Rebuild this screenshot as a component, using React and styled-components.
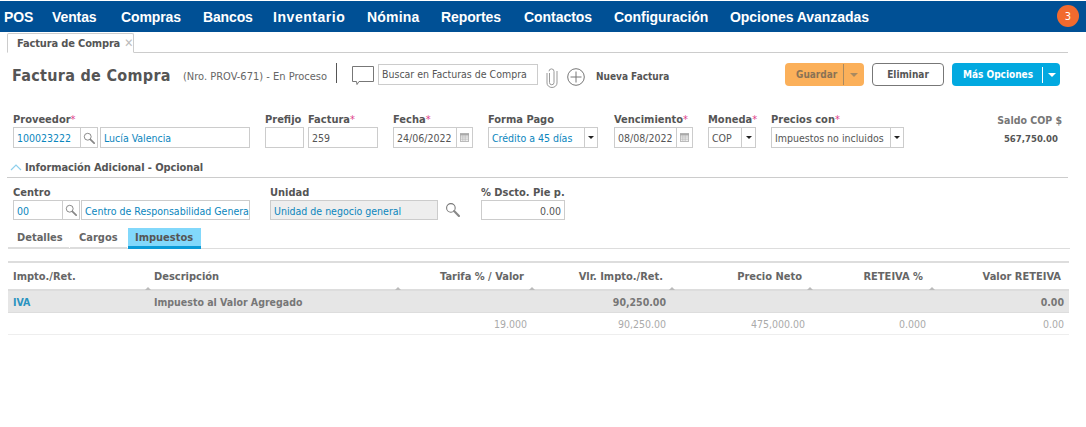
import React from "react";
import styled, { createGlobalStyle } from "styled-components";

const Global = createGlobalStyle`
  html, body { margin: 0; padding: 0; background: #fff; }
  body { font-family: "DejaVu Sans", Tahoma, sans-serif; font-stretch: condensed; font-size: 11px; color: #555; }
  * { box-sizing: border-box; }
`;

const Page = styled.div`width: 1086px; height: 427px; overflow: hidden; background: #fff; position: relative;`;

const Nav = styled.nav`
  margin-top: 1px; height: 31px; background: #005095; display: flex; align-items: center; position: relative;
`;
const NavItem = styled.span`
  width: ${p => p.$w}px; flex: none; color: #fff; font-family: "Liberation Sans", sans-serif; font-weight: 700; font-size: 14px; white-space: nowrap;
  letter-spacing: ${p => p.$ls}px;
`;
const NavList = styled.div`display: flex; padding-left: 4px; flex: 1;`;
const Badge = styled.span`
  width: 22px; height: 22px; margin-right: 7px; margin-top: -1px; border-radius: 50%; background: #f26a2e; color: #fff; font-size: 11px; display: flex; align-items: center; justify-content: center;
`;

const TabBar = styled.div`
  margin: 1px 18px 0 7px; height: 20px; border-bottom: 1px solid #ccc; display: flex;
`;
const DocTab = styled.div`
  width: 127px; height: 20px; border: 1px solid #ccc; border-bottom: 1px solid #fff; border-radius: 2px 2px 0 0;
  padding-left: 9px; display: flex; align-items: center; gap: 4px; font-weight: 700; font-size: 11px; letter-spacing: -.15px; color: #555; white-space: nowrap;
`;
const Close = styled.span`color: #bbb; font-size: 12px; font-weight: 400; line-height: 1;`;

const TitleRow = styled.div`
  height: 47px; padding: 9px 0 0 12px; display: flex; align-items: flex-start;
`;
const H1 = styled.h1`
  margin: 5px 0 0; width: 171px; flex: none; font-size: 16px; line-height: 18px; font-weight: 700; color: #555; white-space: nowrap; letter-spacing: .3px;
`;
const Sub = styled.span`margin-top: 8px; width: 153px; flex: none; font-size: 11px; color: #666; white-space: nowrap;`;
const VBar = styled.span`width: 1px; height: 20px; margin: 1px 15px 0 0; background: #555; flex: none;`;
const SearchBox = styled.div`
  width: 160px; height: 21px; margin: 2px 0 0 4px; flex: none; border: 1px solid #ccc; padding-left: 3px; font-size: 10.5px; line-height: 19px; color: #555; white-space: nowrap; overflow: hidden;
`;
const IconSlot = styled.span`display: block; flex: none; margin: ${p => p.$m};`;
const NewInvoice = styled.span`margin: 9px 0 0 11px; width: 189px; flex: none; font-weight: 700; font-size: 10px; color: #555; white-space: nowrap;`;
const Btn = styled.div`
  flex: none; height: 23px; width: ${p => p.$w}px; margin: 1px 0 0 ${p => p.$ml}px; border-radius: 4px; display: flex; align-items: center;
  font-weight: 700; font-size: 10px; white-space: nowrap;
  background: ${p => p.$bg}; color: ${p => p.$c}; border: ${p => p.$bd || "none"};
  justify-content: ${p => p.$center ? "center" : "flex-start"};
`;
const BtnLabel = styled.span`padding-left: ${p => p.$pl}px; width: ${p => p.$w}px; flex: none;`;
const BtnSep = styled.span`width: 1px; height: ${p => p.$h}px; background: ${p => p.$c}; flex: none;`;
const BtnCaret = styled.span`
  width: 0; height: 0; margin-left: ${p => p.$ml}px; border-left: 4px solid transparent; border-right: 4px solid transparent; border-top: 4px solid ${p => p.$c}; flex: none;
`;

const FormRow = styled.div`display: flex; align-items: flex-start; padding-left: 13px; margin-top: ${p => p.$mt || 0}px;`;
const Field = styled.div`width: ${p => p.$w}px; margin-left: ${p => p.$ml || 0}px; flex: none;`;
const Label = styled.div`height: 15px; font-size: 11px; line-height: 16px; font-weight: 700; color: #555; white-space: nowrap;`;
const Req = styled.span`color: #e0408a; font-weight: 400;`;
const Inputs = styled.div`display: flex; height: ${p => p.$h || 21}px;`;
const Box = styled.div`
  height: 100%; border: 1px solid #ccc; font-size: 10.5px; line-height: 20px; padding: 0 3px; overflow: hidden; white-space: nowrap;
  width: ${p => p.$w ? p.$w + "px" : "auto"}; flex: ${p => p.$w ? "none" : 1};
  color: ${p => p.$blue ? "#0b86bd" : "#555"};
  background: ${p => p.$grey ? "#eeeeee" : "#fff"};
  margin-left: ${p => p.$ml || 0}px;
  border-left-width: ${p => p.$nl ? 0 : 1}px;
  text-align: ${p => p.$right ? "right" : "left"};
  display: ${p => p.$icon ? "flex" : "block"};
  align-items: center; justify-content: center;
  ${p => p.$icon ? "padding: 0;" : ""}
`;
const SmallCaret = styled.span`width: 0; height: 0; border-left: 3px solid transparent; border-right: 3px solid transparent; border-top: 3px solid #222;`;

const Saldo = styled.div`width: 158px; margin-left: 0; text-align: right; flex: none;`;
const SaldoLabel = styled.div`height: 15px; font-weight: 700; font-size: 10.5px; line-height: 16px; color: #777;`;
const SaldoValue = styled.div`margin: 5px 4px 0 0; font-weight: 700; font-size: 9.5px; line-height: 14px; color: #555;`;

const Section = styled.div`
  margin: 10px 18px 0 7px; height: 20px; border-bottom: 1px solid #ccc; display: flex; align-items: center; gap: 3px; padding: 0 0 1px 3px;
  font-weight: 700; font-size: 11px; color: #555; letter-spacing: -.1px;
`;

const DetailTabs = styled.div`
  margin: 8px 16px 0 8px; height: 21px; border-bottom: 1px solid #ddd; display: flex;
`;
const DTab = styled.div`
  width: ${p => p.$w}px; height: ${p => p.$on ? 21 : 20}px; font-weight: 700; font-size: 11px; line-height: 20px; padding-left: ${p => p.$pl}px; flex: none; color: #666;
  border-bottom: ${p => p.$on ? "3px solid #0a9bd8" : "1px solid #ddd"};
  background: ${p => p.$on ? "#82d8fb" : "#fff"};
  margin-right: ${p => p.$mr || 0}px; white-space: nowrap;
  ${p => p.$on ? "color:#555;" : ""}
`;

const Table = styled.div`margin: 12px 0 0 8px; width: 1061px; border-top: 2px solid #ddd;`;
const Grid = styled.div`
  display: grid; grid-template-columns: 140px 250px 134px 140px 138px 122px 137px; align-items: center;
`;
const Head = styled(Grid)`height: 28px; border-bottom: 2px solid #ddd; position: relative;`;
const HCell = styled.div`
  font-weight: 700; font-size: 11px; color: #666; white-space: nowrap; position: relative; height: 100%; line-height: 27px;
  text-align: ${p => p.$right ? "right" : "left"};
  padding: ${p => p.$right ? `0 ${p.$pr}px 0 0` : "0 0 0 5px"};
  ${p => p.$left6 ? "padding-left: 6px;" : ""}
`;
const Tick = styled.span`
  position: absolute; right: -3px; bottom: 0; width: 0; height: 0; border-left: 3px solid transparent; border-right: 3px solid transparent; border-bottom: 3px solid #bbb;
`;
const RowA = styled(Grid)`height: 22px; background: #e6e6e6; border-bottom: 1px solid #ddd; font-weight: 700; font-size: 10.5px; color: #777;`;
const RowB = styled(Grid)`height: 22px; border-bottom: 1px solid #eee; font-size: 10.5px; color: #aaa;`;
const Cell = styled.div`
  white-space: nowrap; padding: ${p => p.$right ? `0 ${p.$pr}px 0 0` : "0 0 0 5px"};
  text-align: ${p => p.$right ? "right" : "left"};
  ${p => p.$link ? "color:#2a93c0;" : ""}
  ${p => p.$left6 ? "padding-left: 6px;" : ""}
`;

const Magnifier = ({ s = 13 }) => (
  <svg width={s} height={s} viewBox="0 0 14 14" fill="none" stroke="#777">
    <circle cx="5.5" cy="5.5" r="4" strokeWidth="1" />
    <path d="M8.5 8.5L13 13" strokeWidth="2" strokeLinecap="round" stroke="#888" />
  </svg>
);
const Cal = () => (
  <svg width="11" height="11" viewBox="0 0 11 11" fill="none" stroke="#bbb" strokeWidth="1">
    <rect x="1.5" y="1.5" width="8" height="8" fill="#eee" />
    <path d="M1 2.5h9" stroke="#aaa" strokeWidth="2" />
    <path d="M1.5 5h8M1.5 7.2h8M3.8 3v6.5M6.2 3v6.5" strokeWidth=".7" />
  </svg>
);
const Chat = () => (
  <svg width="22" height="19" viewBox="0 0 22 19" fill="#fff" stroke="#777" strokeWidth="1">
    <path d="M.5.5h21v15H7L5 18.5 4.500 15.500H.5z" />
  </svg>
);
const Clip = () => (
  <svg width="12" height="20" viewBox="0 0 12 20" fill="none" stroke="#999" strokeWidth="1">
    <path d="M3.500 5v9.500a2.200 2.200 0 0 0 4.500 0V3.500a2.500 2.500 0 0 0-5-.2" />
    <path d="M1 5v10a5 4.500 0 0 0 10 0V3" />
  </svg>
);
const Plus = () => (
  <svg width="18" height="18" viewBox="0 0 18 18" fill="none" stroke="#777" strokeWidth="1">
    <circle cx="9" cy="9" r="8.300" />
    <path d="M9 3.500v11M3.500 9h11" />
  </svg>
);
const Chevron = () => (
  <svg width="12" height="7" viewBox="0 0 12 7" fill="none" stroke="#8fd0ec" strokeWidth="1.200">
    <path d="M1 6l5-5 5 5" />
  </svg>
);

const nav = [["POS",48,-.1],["Ventas",69,-.1],["Compras",82,-.1],["Bancos",70,-.15],["Inventario",94,.55],["Nómina",74,.2],["Reportes",83,-.1],["Contactos",90,-.05],["Configuración",116,-.05],["Opciones Avanzadas",150,-.05]];

export default function App() {
  return (
    <Page>
      <Global />
      <Nav>
        <NavList>{nav.map(([t, w, ls]) => <NavItem key={t} $w={w} $ls={ls}>{t}</NavItem>)}</NavList>
        <Badge>3</Badge>
      </Nav>
      <TabBar><DocTab>Factura de Compra <Close>✕</Close></DocTab></TabBar>
      <TitleRow>
        <H1>Factura de Compra</H1>
        <Sub>(Nro. PROV-671) - En Proceso</Sub>
        <VBar />
        <IconSlot $m="4px 0 0 0"><Chat /></IconSlot>
        <SearchBox>Buscar en Facturas de Compra</SearchBox>
        <IconSlot $m="6px 0 0 8px"><Clip /></IconSlot>
        <IconSlot $m="6px 0 0 9px"><Plus /></IconSlot>
        <NewInvoice>Nueva Factura</NewInvoice>
        <Btn $w={79} $ml={0} $bg="#fbb05a" $c="#8a7355">
          <BtnLabel $pl={11} $w={58}>Guardar</BtnLabel><BtnSep $h={21} $c="#a98a60" /><BtnCaret $ml={6} $c="#a98a60" />
        </Btn>
        <Btn $w={72} $ml={8} $bg="#fff" $c="#555" $bd="1px solid #777" $center>Eliminar</Btn>
        <Btn $w={108} $ml={8} $bg="#02a9e0" $c="#fff">
          <BtnLabel $pl={11} $w={90}>Más Opciones</BtnLabel><BtnSep $h={16} $c="#fff" /><BtnCaret $ml={5} $c="#fff" />
        </Btn>
      </TitleRow>

      <FormRow $mt={12}>
        <Field $w={237}>
          <Label>Proveedor<Req>*</Req></Label>
          <Inputs>
            <Box $w={68} $blue>100023222</Box>
            <Box $w={17} $nl $icon><Magnifier s={12} /></Box>
            <Box $ml={2} $blue>Lucía Valencia</Box>
          </Inputs>
        </Field>
        <Field $w={39} $ml={15}><Label>Prefijo</Label><Inputs><Box /></Inputs></Field>
        <Field $w={70} $ml={4}><Label>Factura<Req>*</Req></Label><Inputs><Box>259</Box></Inputs></Field>
        <Field $w={80} $ml={15}>
          <Label>Fecha<Req>*</Req></Label>
          <Inputs><Box $w={64}>24/06/2022</Box><Box $nl $icon><Cal /></Box></Inputs>
        </Field>
        <Field $w={110} $ml={15}>
          <Label>Forma Pago</Label>
          <Inputs><Box $w={97} $blue>Crédito a 45 días</Box><Box $nl $icon><SmallCaret /></Box></Inputs>
        </Field>
        <Field $w={79} $ml={16}>
          <Label>Vencimiento<Req>*</Req></Label>
          <Inputs><Box $w={63}>08/08/2022</Box><Box $nl $icon><Cal /></Box></Inputs>
        </Field>
        <Field $w={48} $ml={15}>
          <Label>Moneda<Req>*</Req></Label>
          <Inputs><Box $w={34}>COP</Box><Box $nl $icon><SmallCaret /></Box></Inputs>
        </Field>
        <Field $w={133} $ml={15}>
          <Label>Precios con<Req>*</Req></Label>
          <Inputs><Box $w={120}>Impuestos no incluidos</Box><Box $nl $icon><SmallCaret /></Box></Inputs>
        </Field>
        <Saldo><SaldoLabel>Saldo COP $</SaldoLabel><SaldoValue>567,750.00</SaldoValue></Saldo>
      </FormRow>

      <Section><Chevron /> Información Adicional - Opcional</Section>

      <FormRow $mt={7}>
        <Field $w={237}>
          <Label>Centro</Label>
          <Inputs $h={20}>
            <Box $w={50} $blue>00</Box>
            <Box $w={17} $nl $icon><Magnifier s={12} /></Box>
            <Box $ml={1} $blue>Centro de Responsabilidad General</Box>
          </Inputs>
        </Field>
        <Field $w={190} $ml={20}>
          <Label>Unidad</Label>
          <Inputs $h={20}>
            <Box $w={168} $blue $grey>Unidad de negocio general</Box>
            <IconSlot $m="2px 0 0 7px"><Magnifier s={15} /></IconSlot>
          </Inputs>
        </Field>
        <Field $w={84} $ml={21}>
          <Label>% Dscto. Pie p.</Label>
          <Inputs $h={20}><Box $right>0.00</Box></Inputs>
        </Field>
      </FormRow>

      <DetailTabs>
        <DTab $w={61} $pl={9} $mr={1}>Detalles</DTab>
        <DTab $w={57} $pl={9} $mr={1}>Cargos</DTab>
        <DTab $w={73} $pl={7} $on>Impuestos</DTab>
      </DetailTabs>

      <Table>
        <Head>
          <HCell><Tick />Impto./Ret.</HCell>
          <HCell $left6><Tick />Descripción</HCell>
          <HCell $right $pr={8}><Tick />Tarifa % / Valor</HCell>
          <HCell $right $pr={9}><Tick />Vlr. Impto./Ret.</HCell>
          <HCell $right $pr={8}><Tick />Precio Neto</HCell>
          <HCell $right $pr={9}><Tick />RETEIVA %</HCell>
          <HCell $right $pr={8}>Valor RETEIVA</HCell>
        </Head>
        <RowA>
          <Cell $link>IVA</Cell>
          <Cell $left6>Impuesto al Valor Agregado</Cell>
          <Cell />
          <Cell $right $pr={6}>90,250.00</Cell>
          <Cell />
          <Cell />
          <Cell $right $pr={5}>0.00</Cell>
        </RowA>
        <RowB>
          <Cell />
          <Cell />
          <Cell $right $pr={5}>19.000</Cell>
          <Cell $right $pr={6}>90,250.00</Cell>
          <Cell $right $pr={5}>475,000.00</Cell>
          <Cell $right $pr={6}>0.000</Cell>
          <Cell $right $pr={5}>0.00</Cell>
        </RowB>
      </Table>
    </Page>
  );
}
